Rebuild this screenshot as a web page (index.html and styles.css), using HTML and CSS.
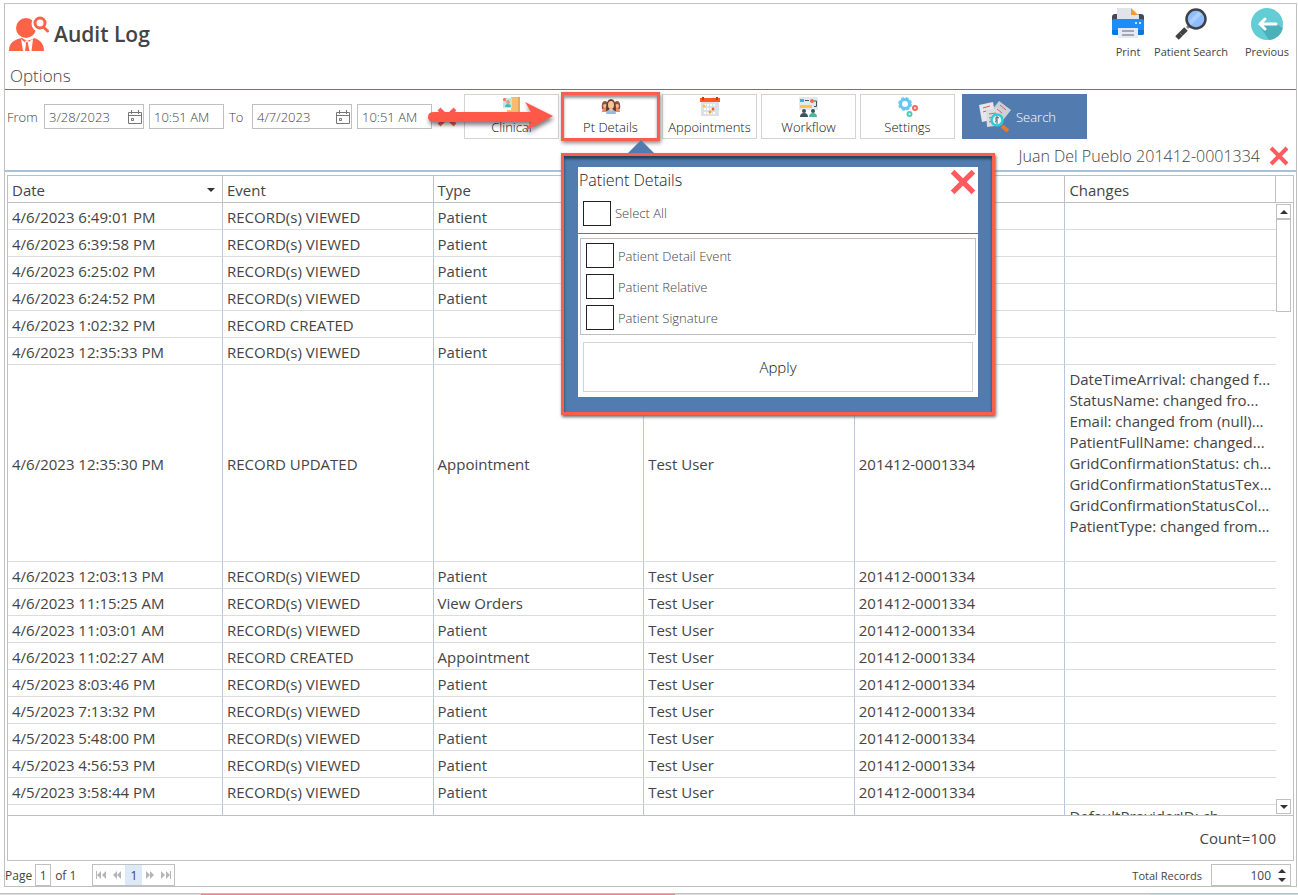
FILE: index.html
```html
<!DOCTYPE html>
<html lang="en">
<head>
    <meta charset="UTF-8">
    <meta name="viewport" content="width=device-width, initial-scale=1.0">
    <title>Audit Log</title>
    <link rel="stylesheet" href="styles.css">
</head>
<body>
    <svg class="defs" width="0" height="0">
        <symbol id="icon-close" viewBox="0 0 20 20">
            <path d="M2 2L18 18M18 2L2 18" fill="none" stroke="#ff5a5f" stroke-width="4"/>
        </symbol>
        <symbol id="icon-calendar" viewBox="0 0 14 14">
            <path d="M0.500 2.500H13.500V13.500H0.500ZM0.500 5.500H13.500M3.500 0V4M10.500 0V4M3.500 8.500H5.500V10.500H3.500Z" fill="none" stroke="#777" stroke-width="1"/>
        </symbol>
    </svg>

    <div class="window">
        <header class="header">
            <svg class="title-icon" viewBox="0 0 40 36">
                <path d="M0 35C0 27 4 24 13 22C17 25 21 25 25 22C31 24 35 27 35 35Z" fill="#ff6347"/>
                <circle cx="17" cy="12" r="10" fill="#ff6347"/>
                <circle cx="31" cy="7.500" r="8.500" fill="#fff"/>
                <circle cx="31" cy="7" r="5" fill="#fff" stroke="#ff6347" stroke-width="3"/>
                <path d="M34.500 11L38.500 15" stroke="#ff6347" stroke-width="3" stroke-linecap="round"/>
                <path d="M12 23L14 35H16L17 28L16 25L18 24L20 25L19 28L20.500 35H22.500L24 23L22 24L19 27L18 25L17 27L13 24Z" fill="#fff"/>
            </svg>
            <h1>Audit Log</h1>
            <nav class="header-actions">
                <button type="button" class="action">
                    <svg viewBox="0 0 32 32">
                        <path d="M0 9Q0 6 3 6H29Q32 6 32 9V15H0Z" fill="#424954"/>
                        <path d="M5 12V0H19L27 7V12Z" fill="#dfe5eb"/>
                        <path d="M19 0L26 7H19Z" fill="#ff9727"/>
                        <rect y="11" width="32" height="16" rx="2" fill="#1e8df5"/>
                        <path d="M0 22H32V25Q32 27 30 27H2Q0 27 0 25Z" fill="#0b76dc"/>
                        <circle cx="24" cy="15" r="1" fill="#fff"/>
                        <circle cx="28" cy="15" r="1" fill="#fff"/>
                        <path d="M6 20H26V30H6Z" fill="#e5eaf0"/>
                        <path d="M10 23H22M10 27H22" stroke="#8b929c" stroke-width="1.500"/>
                    </svg>
                    Print
                </button>
                <button type="button" class="action">
                    <svg viewBox="0 0 32 32">
                        <path d="M12 20L17 15" stroke="#888" stroke-width="3"/>
                        <path d="M2 30L11 21" stroke="#3f4145" stroke-width="5"/>
                        <path d="M5 25L8 28" stroke="#777" stroke-width="1"/>
                        <circle cx="21" cy="11" r="9.500" fill="#8ebcff" stroke="#3f4145" stroke-width="2.500"/>
                        <path d="M14 13L23 4L27 6L16 17Z" fill="#a9ceff"/>
                    </svg>
                    Patient Search
                </button>
                <button type="button" class="action">
                    <svg viewBox="0 0 32 32">
                        <circle cx="16" cy="16" r="16" fill="#63ccd5"/>
                        <path d="M25 16L32 20Q29 31 18 32L8 17Z" fill="#4bb0ba"/>
                        <path d="M25 16H9M14 11L9 16L14 21" fill="none" stroke="#fff" stroke-width="3" stroke-linecap="round"/>
                    </svg>
                    Previous
                </button>
            </nav>
        </header>
        <h2 class="options-title">Options</h2>

        <form class="toolbar">
            <label for="from-date" class="label-from">From</label>
            <div class="date-box">
                <input type="text" id="from-date" value="3/28/2023">
                <button type="button" aria-label="Pick start date"><svg><use href="#icon-calendar"/></svg></button>
            </div>
            <input type="text" class="time-box" value="10:51 AM" aria-label="From time">
            <label for="to-date" class="label-to">To</label>
            <div class="date-box">
                <input type="text" id="to-date" value="4/7/2023">
                <button type="button" aria-label="Pick end date"><svg><use href="#icon-calendar"/></svg></button>
            </div>
            <input type="text" class="time-box" value="10:51 AM" aria-label="To time">
            <button type="button" class="close clear-dates" aria-label="Clear dates"><svg><use href="#icon-close"/></svg></button>

            <div class="filters">
                <button type="button" class="filter">
                    <svg viewBox="0 0 20 20">
                        <path d="M9 0H18V20H5V13H9Z" fill="#f6bd72"/>
                        <path d="M16 0H18V20H16Z" fill="#e4a75c"/>
                        <path d="M1 1H10V11H1Z" fill="#bfe8e5"/>
                        <circle cx="2.500" cy="2.500" r="1.500" fill="#ff6b5c"/>
                        <circle cx="6" cy="5" r="2" fill="#e8a06d"/>
                        <path d="M3 10Q3 7 6 7T9 10Z" fill="#52b6ad"/>
                    </svg>
                    Clinical
                </button>
                <div class="filter-open">
                    <button type="button" class="filter">
                        <svg viewBox="0 0 20 20">
                            <path d="M1 12Q0 4 4 4Q8 4 7 13ZM13 13Q12 4 16 4Q20 4 19 12Z" fill="#8d5340"/>
                            <circle cx="4" cy="9" r="2" fill="#f3b98e"/>
                            <circle cx="16" cy="9" r="2" fill="#f3b98e"/>
                            <path d="M1 15Q1 11 4 11T7 15ZM13 15Q13 11 16 11T19 15Z" fill="#e98b60"/>
                            <path d="M5 14Q5 2 10 2T15 14Z" fill="#66392e"/>
                            <ellipse cx="10" cy="8" rx="3" ry="4" fill="#f6c39a"/>
                            <path d="M5 17Q5 13 10 12Q15 13 15 17Z" fill="#8fbce6"/>
                            <path d="M8 12H12L10 15Z" fill="#f6c39a"/>
                        </svg>
                        Pt Details
                    </button>
                    <section class="popup">
                        <div class="popup-body">
                            <div class="popup-head">
                                <h3>Patient Details</h3>
                                <button type="button" class="close" aria-label="Close"><svg><use href="#icon-close"/></svg></button>
                            </div>
                            <label class="check select-all"><input type="checkbox"> Select All</label>
                            <div class="check-list">
                                <label class="check"><input type="checkbox"> Patient Detail Event</label>
                                <label class="check"><input type="checkbox"> Patient Relative</label>
                                <label class="check"><input type="checkbox"> Patient Signature</label>
                            </div>
                            <button type="button" class="apply">Apply</button>
                        </div>
                    </section>
                </div>
                <button type="button" class="filter">
                    <svg viewBox="0 0 20 20">
                        <path d="M1 5H19V19H1Z" fill="#dce1e8"/>
                        <path d="M0 1H20V5H0Z" fill="#ff5722"/>
                        <path d="M3 0V3M17 0V3" stroke="#c43c11" stroke-width="2"/>
                        <path d="M4 8H16M4 12H16M4 16H16" stroke="#fff" stroke-width="2" stroke-dasharray="2 1"/>
                        <circle cx="4" cy="9" r="1.500" fill="#fcc82b"/>
                        <circle cx="13" cy="12" r="1.500" fill="#ff5722"/>
                        <circle cx="10" cy="15" r="1.500" fill="#f7a023"/>
                    </svg>
                    Appointments
                </button>
                <button type="button" class="filter">
                    <svg viewBox="0 0 20 20">
                        <path d="M0 0H19V13H0Z" fill="#e4e9ec"/>
                        <path d="M1 2H5V5H1Z" fill="#3bb0e8"/>
                        <path d="M6 3.500H10M15 4H17.500V9.500H15" fill="none" stroke="#47545f"/>
                        <circle cx="13" cy="4" r="2" fill="#f16b51"/>
                        <path d="M1 8H13V11H1Z" fill="#fcc44d"/>
                        <circle cx="5" cy="14" r="2" fill="#3e5163"/>
                        <circle cx="14" cy="14" r="2" fill="#3e5163"/>
                        <path d="M1 20Q1 16 5 16T9 20Z" fill="#3e5163"/>
                        <path d="M10 20Q10 16 14 16T18 20Z" fill="#4bb89d"/>
                    </svg>
                    Workflow
                </button>
                <button type="button" class="filter">
                    <svg viewBox="0 0 20 20">
                        <circle cx="7" cy="7" r="6" fill="none" stroke="#7bcdf5" stroke-width="2" stroke-dasharray="3 1.710"/>
                        <circle cx="7" cy="7" r="4.500" fill="#fff" stroke="#65c5f3" stroke-width="3"/>
                        <circle cx="17" cy="11" r="2" fill="none" stroke="#f36b5b" stroke-width="2"/>
                        <circle cx="11.500" cy="17" r="2" fill="none" stroke="#49d0b0" stroke-width="2"/>
                    </svg>
                    Settings
                </button>
            </div>
            <button type="submit" class="search">
                <svg viewBox="0 0 32 32">
                    <path d="M0 4L14 1L17 18L3 21Z" fill="#e4e8eb"/>
                    <path d="M20 0L32 9L21 23L10 13Z" fill="#cbd0d6"/>
                    <path d="M7 9L20 7L23 24L8 26Z" fill="#d9dde2"/>
                    <path d="M4 7L11 5M4 11L7 10M21 4L27 9M18 8L23 12M10 13L17 12M10 17L14 16M10 21L13 20" stroke="#ec545d" stroke-width="1"/>
                    <path d="M23 25L29 30" stroke="#ed762a" stroke-width="4"/>
                    <circle cx="18" cy="19" r="5.500" fill="#edf5f6" stroke="#2dcbd5" stroke-width="2.500"/>
                    <path d="M20 17Q16 15 17 18T16 21M18 15V23" fill="none" stroke="#4b6470"/>
                </svg>
                Search
            </button>

            <svg class="pointer" viewBox="0 0 130 36">
                <path d="M7 12H104L98 2L126 16L98 31L104 22H7Q1 22 1 17T7 12Z" fill="#fe5948"/>
            </svg>
        </form>

        <div class="patient">
            <span>Juan Del Pueblo 201412-0001334</span>
            <button type="button" class="close" aria-label="Clear patient"><svg><use href="#icon-close"/></svg></button>
        </div>

        <main class="grid">
            <div class="grid-view">
                <div class="grid-rows">
                    <table>
                        <thead>
                            <tr><th class="sorted">Date</th><th>Event</th><th>Type</th><th></th><th></th><th>Changes</th></tr>
                        </thead>
                        <tbody>
                            <tr><td>4/6/2023 6:49:01 PM</td><td>RECORD(s) VIEWED</td><td>Patient</td><td></td><td></td><td></td></tr>
                            <tr><td>4/6/2023 6:39:58 PM</td><td>RECORD(s) VIEWED</td><td>Patient</td><td></td><td></td><td></td></tr>
                            <tr><td>4/6/2023 6:25:02 PM</td><td>RECORD(s) VIEWED</td><td>Patient</td><td></td><td></td><td></td></tr>
                            <tr><td>4/6/2023 6:24:52 PM</td><td>RECORD(s) VIEWED</td><td>Patient</td><td></td><td></td><td></td></tr>
                            <tr><td>4/6/2023 1:02:32 PM</td><td>RECORD CREATED</td><td></td><td></td><td></td><td></td></tr>
                            <tr><td>4/6/2023 12:35:33 PM</td><td>RECORD(s) VIEWED</td><td>Patient</td><td></td><td></td><td></td></tr>
                            <tr>
                                <td>4/6/2023 12:35:30 PM</td><td>RECORD UPDATED</td><td>Appointment</td><td>Test User</td><td>201412-0001334</td>
                                <td class="changes">DateTimeArrival: changed f...<br>StatusName: changed fro...<br>Email: changed from (null)...<br>PatientFullName: changed...<br>GridConfirmationStatus: ch...<br>GridConfirmationStatusTex...<br>GridConfirmationStatusCol...<br>PatientType: changed from...</td>
                            </tr>
                            <tr><td>4/6/2023 12:03:13 PM</td><td>RECORD(s) VIEWED</td><td>Patient</td><td>Test User</td><td>201412-0001334</td><td></td></tr>
                            <tr><td>4/6/2023 11:15:25 AM</td><td>RECORD(s) VIEWED</td><td>View Orders</td><td>Test User</td><td>201412-0001334</td><td></td></tr>
                            <tr><td>4/6/2023 11:03:01 AM</td><td>RECORD(s) VIEWED</td><td>Patient</td><td>Test User</td><td>201412-0001334</td><td></td></tr>
                            <tr><td>4/6/2023 11:02:27 AM</td><td>RECORD CREATED</td><td>Appointment</td><td>Test User</td><td>201412-0001334</td><td></td></tr>
                            <tr><td>4/5/2023 8:03:46 PM</td><td>RECORD(s) VIEWED</td><td>Patient</td><td>Test User</td><td>201412-0001334</td><td></td></tr>
                            <tr><td>4/5/2023 7:13:32 PM</td><td>RECORD(s) VIEWED</td><td>Patient</td><td>Test User</td><td>201412-0001334</td><td></td></tr>
                            <tr><td>4/5/2023 5:48:00 PM</td><td>RECORD(s) VIEWED</td><td>Patient</td><td>Test User</td><td>201412-0001334</td><td></td></tr>
                            <tr><td>4/5/2023 4:56:53 PM</td><td>RECORD(s) VIEWED</td><td>Patient</td><td>Test User</td><td>201412-0001334</td><td></td></tr>
                            <tr><td>4/5/2023 3:58:44 PM</td><td>RECORD(s) VIEWED</td><td>Patient</td><td>Test User</td><td>201412-0001334</td><td></td></tr>
                            <tr><td></td><td></td><td></td><td></td><td></td><td class="changes">DefaultProviderID: ch...</td></tr>
                        </tbody>
                    </table>
                </div>
                <div class="scrollbar">
                    <span class="scroll-arrow"><i class="up"></i></span>
                    <span class="thumb"></span>
                    <span class="scroll-arrow last"><i class="down"></i></span>
                </div>
            </div>
            <div class="grid-count">Count=100</div>
        </main>

        <footer class="pager">
            <label for="page">Page</label>
            <input type="text" id="page" value="1">
            <span>of 1</span>
            <div class="pages">
                <button type="button" aria-label="First page"><svg viewBox="0 0 10 10"><path d="M0 1H1V9H0ZM5 1V9L1 5ZM10 1V9L6 5Z"/></svg></button>
                <button type="button" aria-label="Previous page"><svg viewBox="0 0 10 10"><path d="M5 1V9L1 5ZM9 1V9L5 5Z"/></svg></button>
                <button type="button" class="current">1</button>
                <button type="button" aria-label="Next page"><svg viewBox="0 0 10 10"><path d="M1 1L5 5L1 9ZM5 1L9 5L5 9Z"/></svg></button>
                <button type="button" aria-label="Last page"><svg viewBox="0 0 10 10"><path d="M0 1L4 5L0 9ZM5 1L9 5L5 9ZM9 1H10V9H9Z"/></svg></button>
            </div>
            <label for="total" class="total-label">Total Records</label>
            <div class="total-box">
                <input type="text" id="total" value="100">
                <span class="spinner"><i class="up"></i><i class="down"></i></span>
            </div>
        </footer>
    </div>
    <div class="status-strip"><span class="strip-red"></span><span class="strip-teal"></span></div>
</body>
</html>
```
FILE: styles.css
```css
* {
    box-sizing: border-box;
}
body {
    margin: 0;
    height: 100vh;
    display: flex;
    flex-direction: column;
    overflow: hidden;
    font-family: "Open Sans", "Noto Sans", sans-serif;
    font-size: 15px;
    color: #444;
    background-color: #fff;
}
button, input {
    font-family: inherit;
    color: inherit;
    margin: 0;
}
button {
    padding: 0;
    border: none;
    background: none;
    cursor: pointer;
}
h1, h2, h3 {
    margin: 0;
}
.defs {
    position: absolute;
}
.window {
    flex: 1;
    min-height: 0;
    display: flex;
    flex-direction: column;
    margin: 3px 1px 6px 4px;
    border: 1px solid #c0c0c0;
}

/* header */
.header {
    display: flex;
    align-items: center;
    height: 60px;
    padding-left: 4px;
}
.title-icon {
    width: 40px;
    height: 36px;
    margin-right: 5px;
}
h1 {
    font-size: 21px;
    font-weight: 600;
    line-height: 32px;
}
.header-actions {
    display: flex;
    gap: 10px;
    margin-left: auto;
}
.action {
    display: flex;
    flex-direction: column;
    align-items: center;
    gap: 4px;
    font-size: 11px;
    line-height: 16px;
}
.action:last-child {
    width: 58px;
}
.action svg {
    width: 32px;
    height: 32px;
}
.options-title {
    height: 26px;
    padding-left: 5px;
    border-bottom: 1px solid #527cb0;
    font-size: 17px;
    font-weight: 300;
    line-height: 24px;
}

/* filters toolbar */
.toolbar {
    position: relative;
    display: flex;
    align-items: center;
    height: 53px;
    padding-left: 2px;
    font-size: 13px;
    font-weight: 300;
}
.label-from {
    width: 37px;
}
.label-to {
    width: 28px;
    padding-left: 5px;
}
.date-box {
    display: flex;
    align-items: center;
    width: 100px;
    height: 25px;
    margin-right: 5px;
    border: 1px solid #c0c0c0;
}
.date-box input {
    flex: 1;
    min-width: 0;
    padding: 0 4px;
    border: none;
    font-size: 13px;
    font-weight: 300;
}
.date-box svg {
    display: block;
    width: 14px;
    height: 14px;
    margin-right: 1px;
}
.time-box {
    width: 75px;
    height: 25px;
    padding: 0 4px;
    border: 1px solid #c0c0c0;
    font-size: 13px;
    font-weight: 300;
}
.close svg {
    display: block;
    width: 20px;
    height: 20px;
}
.clear-dates {
    margin: 0 7px 0 5px;
}
.filters {
    display: flex;
    gap: 4px;
}
.filter {
    display: flex;
    flex-direction: column;
    align-items: center;
    width: 95px;
    height: 45px;
    padding-top: 2px;
    border: 1px solid #d3d3d3;
    background-color: #fff;
    font-size: 13px;
    font-weight: 300;
    line-height: 20px;
    color: #111;
}
.filter svg {
    width: 20px;
    height: 20px;
}
.filter-open {
    position: relative;
}
.filter-open .filter {
    outline: 3px solid #fb5d4e;
    outline-offset: -1px;
    box-shadow: 1px 2px 4px 2px #888, inset 0 3px 3px #999;
}
.search {
    display: flex;
    align-items: center;
    gap: 5px;
    width: 125px;
    height: 45px;
    margin-left: 7px;
    padding-left: 17px;
    background-color: #527cb0;
    font-size: 13px;
    font-weight: 300;
    color: #fff;
}
.search svg {
    width: 32px;
    height: 32px;
}
.pointer {
    position: absolute;
    z-index: 3;
    left: 422px;
    top: 10px;
    width: 130px;
    height: 36px;
    filter: drop-shadow(1px 3px 2px rgba(0, 0, 0, 0.5));
}

/* patient details popup */
.popup {
    position: absolute;
    z-index: 2;
    top: 59px;
    left: -2px;
    width: 434px;
    padding: 11px 14px 15px;
    border: 3px solid #fb5d4e;
    background-color: #527cb0;
    box-shadow: 1px 2px 3px #666, inset 0 3px 3px #26405f;
}
.popup::before {
    content: "";
    position: absolute;
    top: -16px;
    left: 64px;
    border-left: 13px solid transparent;
    border-right: 13px solid transparent;
    border-bottom: 13px solid #527cb0;
}
.popup-body {
    background-color: #fff;
    padding-bottom: 5px;
}
.popup-head {
    display: flex;
    justify-content: space-between;
    height: 30px;
    padding: 0 2px 0 1px;
}
.popup h3 {
    font-size: 16px;
    font-weight: 300;
    line-height: 26px;
    color: #222;
}
.popup-head svg {
    width: 26px;
    height: 26px;
}
.check {
    display: flex;
    align-items: center;
    gap: 4px;
    height: 31px;
}
.check input {
    appearance: none;
    width: 28px;
    height: 25px;
    border: 1px solid #222;
    background-color: #fff;
}
.select-all {
    height: 37px;
    padding: 0 5px 4px;
    border-bottom: 1px solid #527cb0;
}
.check-list {
    margin: 4px 2px 7px;
    padding: 1px 5px;
    border: 1px solid #c0c0c0;
}
.apply {
    display: block;
    width: calc(100% - 10px);
    height: 50px;
    margin: 0 5px;
    border: 1px solid #d3d3d3;
    font-size: 15px;
    font-weight: 300;
    color: #111;
}

.patient {
    display: flex;
    align-items: center;
    justify-content: flex-end;
    gap: 9px;
    height: 29px;
    padding: 0 7px 2px 0;
    border-bottom: 2px solid #a9c1de;
    font-size: 16px;
    font-weight: 300;
}

/* audit grid */
.grid {
    flex: 1;
    min-height: 0;
    display: flex;
    flex-direction: column;
    margin: 3px 2px;
    border: 1px solid #c0c0c0;
}
.grid-view {
    flex: 1;
    min-height: 0;
    display: flex;
}
.grid-rows {
    flex: 1;
    min-width: 0;
    overflow: hidden;
}
table {
    width: 100%;
    table-layout: fixed;
    border-collapse: separate;
    border-spacing: 0;
}
th, td {
    height: 27px;
    padding: 2px 4px 0;
    border-right: 1px solid #b8c8dc;
    border-bottom: 1px solid #dcdcdc;
    font-weight: 400;
    line-height: 21px;
    text-align: left;
    white-space: nowrap;
}
th {
    border-color: #c0c0c0;
}
th:first-child {
    width: 215px;
}
td:last-child {
    border-right: none;
}
.sorted::after {
    content: "";
    float: right;
    margin: 8px 3px 0 0;
    border-left: 4px solid transparent;
    border-right: 4px solid transparent;
    border-top: 4px solid #333;
}
.changes {
    height: 197px;
    padding-top: 4px;
    vertical-align: top;
}
tr:last-child .changes {
    padding-top: 1px;
}
.scrollbar {
    display: flex;
    flex-direction: column;
    width: 17px;
    padding-top: 26px;
    background: linear-gradient(#c0c0c0, #c0c0c0) 0 26px / 100% 1px no-repeat;
}
.scroll-arrow {
    display: flex;
    align-items: center;
    justify-content: center;
    width: 15px;
    height: 15px;
    margin-top: 2px;
    border: 1px solid #c0c0c0;
}
.scroll-arrow.last {
    margin: auto 0 1px;
}
.thumb {
    width: 15px;
    height: 93px;
    border: 1px solid #c0c0c0;
}
.up, .down {
    border-left: 4px solid transparent;
    border-right: 4px solid transparent;
}
.up {
    border-bottom: 4px solid #333;
}
.down {
    border-top: 4px solid #333;
}
.grid-count {
    height: 45px;
    padding-right: 17px;
    border-top: 1px solid #c0c0c0;
    line-height: 45px;
    text-align: right;
}

/* pager */
.pager {
    display: flex;
    align-items: center;
    height: 22px;
    padding-right: 5px;
    font-size: 12px;
}
.pager input {
    border: 1px solid #c0c0c0;
    font-size: 12px;
}
#page {
    width: 16px;
    height: 22px;
    margin: 0 4px 0 3px;
    padding: 0;
    text-align: center;
}
.pages {
    display: flex;
    height: 22px;
    margin-left: 16px;
    border: 1px solid #c0c0c0;
}
.pages button {
    width: 16px;
    font-size: 12px;
}
.pages svg {
    width: 10px;
    height: 10px;
    fill: #b5b5b5;
}
.pages .current {
    width: 17px;
    background-color: #dceaf8;
}
.total-label {
    margin-left: auto;
    font-size: 11px;
}
.total-box {
    display: flex;
    align-items: center;
    width: 80px;
    height: 22px;
    margin-left: 9px;
    border: 1px solid #c0c0c0;
}
.total-box input {
    flex: 1;
    min-width: 0;
    padding: 0;
    border: none;
    text-align: right;
}
.spinner {
    display: flex;
    flex-direction: column;
    gap: 5px;
    margin: 0 4px 0 7px;
}
.status-strip {
    display: flex;
    height: 2px;
    border-top: 1px solid #c0c0c0;
    background-color: #ddd;
}
.strip-red {
    width: 474px;
    margin-left: 201px;
    background-color: #dd8a8c;
}
.strip-teal {
    width: 148px;
    margin-left: auto;
    background-color: #c2dcdc;
}
```
